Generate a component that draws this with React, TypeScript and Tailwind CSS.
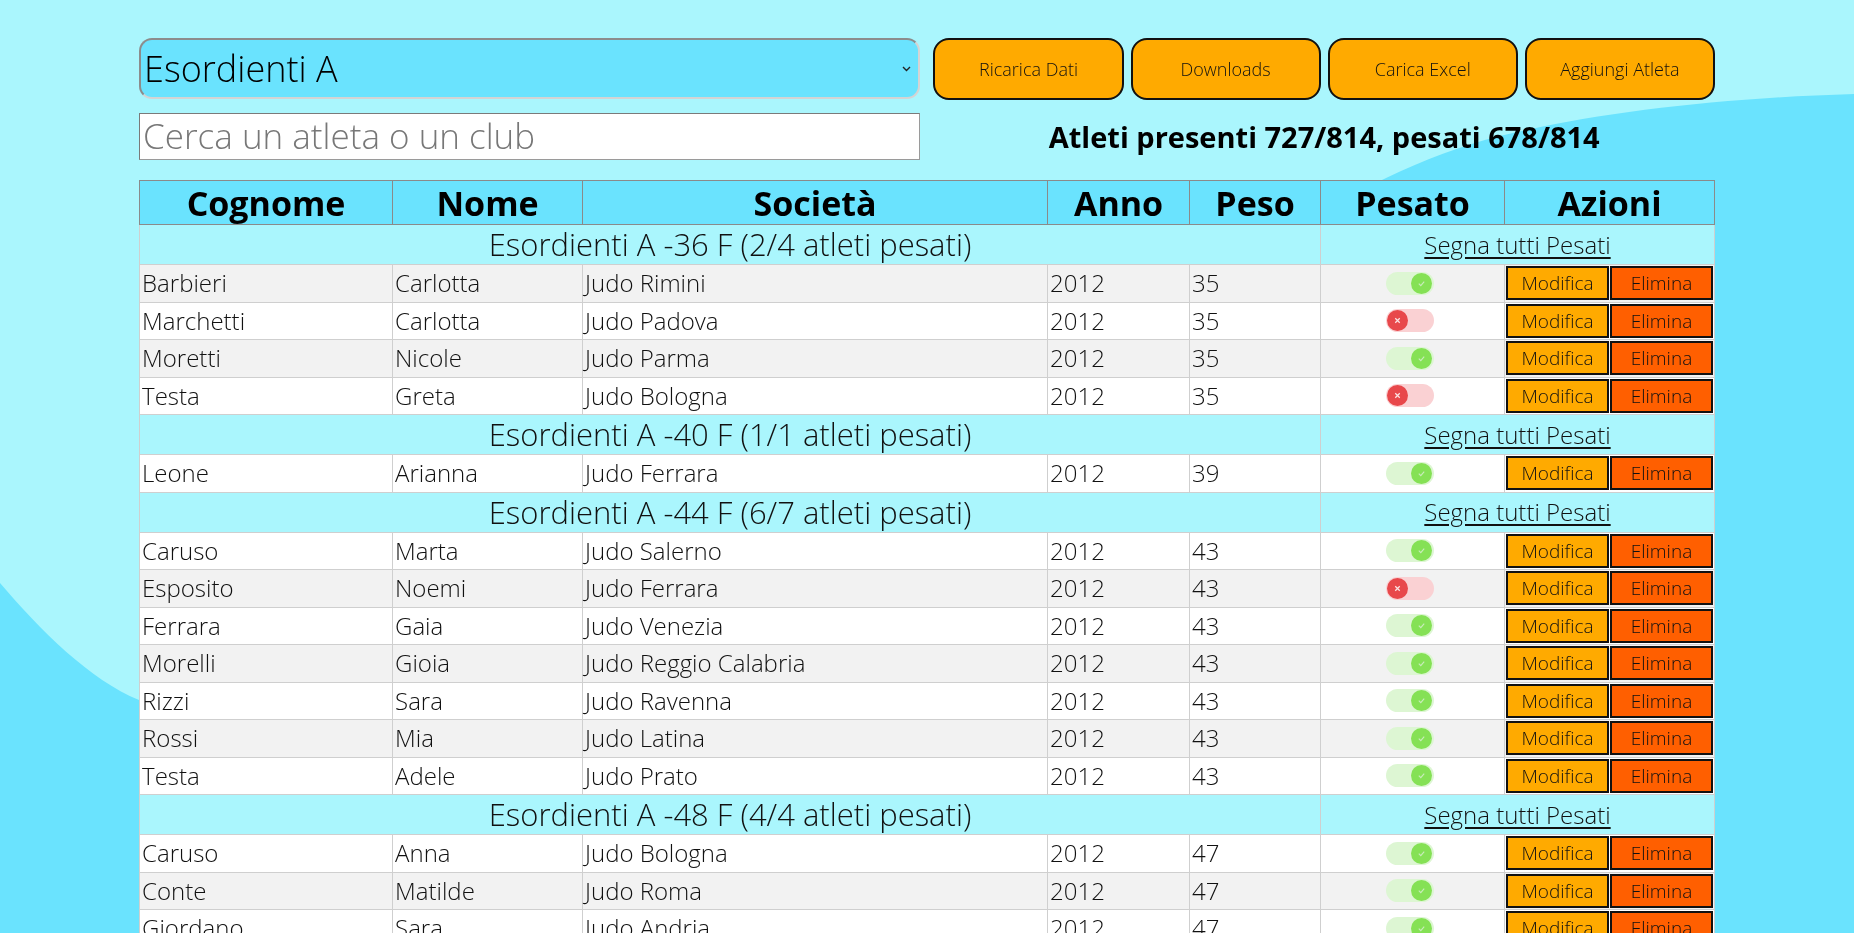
import React from 'react';

type Atleta = {
  cognome: string;
  nome: string;
  societa: string;
  anno: number;
  peso: number;
  pesato: boolean;
};

type Gruppo = { titolo: string; atleti: Atleta[] };

const a = (cognome: string, nome: string, societa: string, peso: number, pesato = true): Atleta => ({
  cognome,
  nome,
  societa,
  anno: 2012,
  peso,
  pesato,
});

const GRUPPI: Gruppo[] = [
  {
    titolo: 'Esordienti A -36 F (2/4 atleti pesati)',
    atleti: [
      a('Barbieri', 'Carlotta', 'Judo Rimini', 35),
      a('Marchetti', 'Carlotta', 'Judo Padova', 35, false),
      a('Moretti', 'Nicole', 'Judo Parma', 35),
      a('Testa', 'Greta', 'Judo Bologna', 35, false),
    ],
  },
  {
    titolo: 'Esordienti A -40 F (1/1 atleti pesati)',
    atleti: [a('Leone', 'Arianna', 'Judo Ferrara', 39)],
  },
  {
    titolo: 'Esordienti A -44 F (6/7 atleti pesati)',
    atleti: [
      a('Caruso', 'Marta', 'Judo Salerno', 43),
      a('Esposito', 'Noemi', 'Judo Ferrara', 43, false),
      a('Ferrara', 'Gaia', 'Judo Venezia', 43),
      a('Morelli', 'Gioia', 'Judo Reggio Calabria', 43),
      a('Rizzi', 'Sara', 'Judo Ravenna', 43),
      a('Rossi', 'Mia', 'Judo Latina', 43),
      a('Testa', 'Adele', 'Judo Prato', 43),
    ],
  },
  {
    titolo: 'Esordienti A -48 F (4/4 atleti pesati)',
    atleti: [
      a('Caruso', 'Anna', 'Judo Bologna', 47),
      a('Conte', 'Matilde', 'Judo Roma', 47),
      a('Giordano', 'Sara', 'Judo Andria', 47),
      a('Greco', 'Sofia', 'Judo Pisa', 47),
    ],
  },
];

const HEADERS = ['Cognome', 'Nome', 'Società', 'Anno', 'Peso', 'Pesato', 'Azioni'];

function Toggle({ on }: { on: boolean }) {
  if (on) {
    return (
      <div className="ml-[65px] flex h-[23px] w-[48px] items-center justify-end rounded-full bg-[#ddf6d3] pr-[2px]">
        <div className="flex h-[21px] w-[21px] items-center justify-center rounded-full bg-[#85e155]">
          <svg width="9" height="9" viewBox="0 0 10 10">
            <path d="M2 5.2 L4.2 7.3 L8 3" fill="none" stroke="#c9ecbb" strokeWidth="1.3" />
          </svg>
        </div>
      </div>
    );
  }
  return (
    <div className="ml-[65px] flex h-[23px] w-[48px] items-center justify-start rounded-full bg-[#fad1d3] pl-[1px]">
      <div className="flex h-[21px] w-[21px] items-center justify-center rounded-full bg-[#e8484b]">
        <svg width="9" height="9" viewBox="0 0 10 10">
          <path d="M2.5 2.5 L7.5 7.5 M7.5 2.5 L2.5 7.5" fill="none" stroke="#fbe3e3" strokeWidth="1.4" />
        </svg>
      </div>
    </div>
  );
}

export default function App() {
  let rowIndex = 0;
  const cell = 'border border-[#cfcfcf] px-[2px] py-0 text-[24px] font-light leading-none';

  return (
    <div className="relative min-h-screen bg-[#aaf6fd] font-['Open_Sans','Noto_Sans',sans-serif] text-[#111]">
      {/* background wave */}
      <svg
        className="fixed inset-0 h-screen w-screen"
        viewBox="0 0 1854 933"
        preserveAspectRatio="none"
      >
        <rect width="1854" height="933" fill="#6ae3fe" />
        <path
          d="M0 0 H1854 V94 C1720 98 1600 112 1500 136 C1200 210 900 600 500 720 C350 760 220 740 139 700 C90 680 40 630 0 583 Z"
          fill="#aaf6fd"
        />
      </svg>

      <div className="relative mx-auto w-[85%] pt-[38px]">
        <div className="grid grid-cols-2 gap-x-[13px]">
          <div className="flex flex-col gap-[14px]">
            <div className="relative">
              <select
                defaultValue="Esordienti A"
                className="h-[61px] w-full appearance-none rounded-[13px] border-2 border-t-[#8c8c8c] border-l-[#8c8c8c] border-r-[#d4d4d4] border-b-[#d4d4d4] bg-[#6ae3fe] pl-[3px] text-[36px] font-light text-black outline-none"
              >
                <option>Esordienti A</option>
                <option>Esordienti B</option>
                <option>Cadetti</option>
              </select>
              <svg
                className="pointer-events-none absolute right-[9px] top-[28px]"
                width="9"
                height="6"
                viewBox="0 0 9 6"
              >
                <path d="M1 1 L4.5 4.5 L8 1" fill="none" stroke="#222" strokeWidth="1.4" />
              </svg>
            </div>
            <input
              placeholder="Cerca un atleta o un club"
              className="h-[47px] w-full border border-t-[#7a7a7a] border-l-[#7a7a7a] border-r-[#9a9a9a] border-b-[#9a9a9a] bg-white pl-[3px] text-[35px] font-light outline-none placeholder:text-[#777]"
            />
          </div>

          <div className="flex flex-col gap-[14px]">
            <div className="flex gap-[7px]">
              {['Ricarica Dati', 'Downloads', 'Carica Excel', 'Aggiungi Atleta'].map((label) => (
                <button
                  key={label}
                  className="h-[62px] flex-1 rounded-[16px] border-2 border-[#111] bg-[#ffaa00] text-[18px] font-light text-[#111]"
                >
                  {label}
                </button>
              ))}
            </div>
            <div className="flex h-[46px] items-center justify-center">
              <span className="text-[29px] font-bold text-black">Atleti presenti 727/814, pesati 678/814</span>
            </div>
          </div>
        </div>

        <table className="mt-[20px] w-full table-fixed border-collapse">
          <colgroup>
            <col className="w-[253px]" />
            <col className="w-[190px]" />
            <col className="w-[465px]" />
            <col className="w-[142px]" />
            <col className="w-[131px]" />
            <col className="w-[184px]" />
            <col />
          </colgroup>
          <thead>
            <tr className="h-[44px] bg-[#6ae3fe]">
              {HEADERS.map((h) => (
                <th
                  key={h}
                  className="border border-[#8a8a8a] p-0 text-center text-[34px] font-bold leading-none text-black"
                >
                  {h}
                </th>
              ))}
            </tr>
          </thead>
          <tbody>
            {GRUPPI.map((g) => {
              rowIndex++;
              const rows = [
                <tr key={g.titolo} className="h-[40px] bg-[#aaf6fd]">
                  <td colSpan={5} className="border border-[#cfcfcf] p-0 text-center text-[31px] font-light leading-none">
                    {g.titolo}
                  </td>
                  <td colSpan={2} className="border border-[#cfcfcf] p-0 text-center">
                    <a href="#" className="text-[24px] font-light text-[#111] underline underline-offset-[3px]">
                      Segna tutti Pesati
                    </a>
                  </td>
                </tr>,
              ];
              g.atleti.forEach((at) => {
                rowIndex++;
                const grey = rowIndex % 2 === 0;
                rows.push(
                  <tr
                    key={g.titolo + at.cognome + at.nome}
                    className={grey ? 'h-[37.5px] bg-[#f2f2f2]' : 'h-[37.5px] bg-white'}
                  >
                    <td className={cell}>{at.cognome}</td>
                    <td className={cell}>{at.nome}</td>
                    <td className={cell}>{at.societa}</td>
                    <td className={cell}>{at.anno}</td>
                    <td className={cell}>{at.peso}</td>
                    <td className="border border-[#cfcfcf] p-0">
                      <Toggle on={at.pesato} />
                    </td>
                    <td className="border border-[#cfcfcf] p-[1px]">
                      <div className="flex h-[34px] gap-[1px]">
                        <button className="flex-1 border-2 border-[#111] bg-[#ffaa00] text-[19px] font-light text-[#111]">
                          Modifica
                        </button>
                        <button className="flex-1 border-2 border-[#111] bg-[#ff5f00] text-[19px] font-light text-[#111]">
                          Elimina
                        </button>
                      </div>
                    </td>
                  </tr>,
                );
              });
              return rows;
            })}
          </tbody>
        </table>
      </div>
    </div>
  );
}
